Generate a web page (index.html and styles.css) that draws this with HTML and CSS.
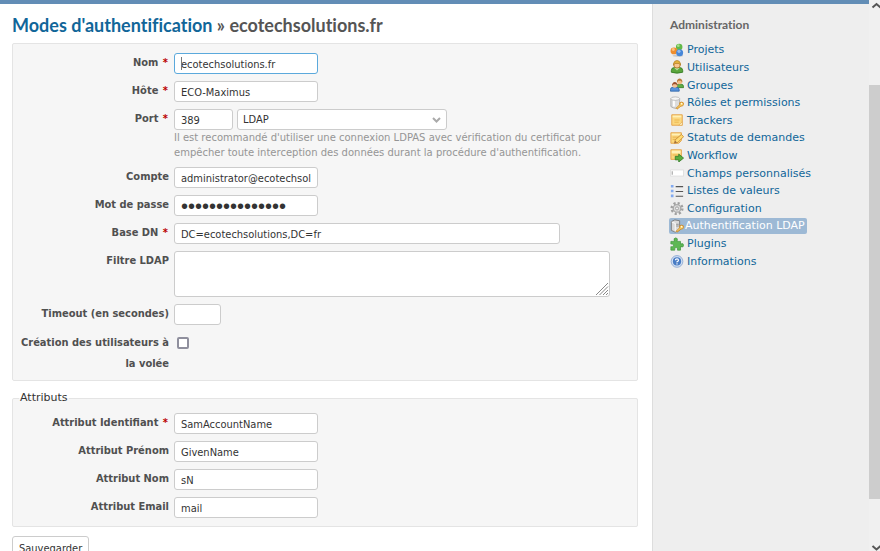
FILE: index.html
```html
<!DOCTYPE html>
<html lang="fr">
<head>
<meta charset="utf-8">
<title>Modes d'authentification</title>
<link rel="stylesheet" href="styles.css">
</head>
<body>
<div class="page">
  <div class="topbar"></div>
  <div class="main">
    <main class="content">
      <h2><a href="#">Modes d'authentification</a> » ecotechsolutions.fr</h2>
      <form>
        <div class="box">
          <div class="row"><label for="name">Nom <span class="required">*</span></label><div class="field caret"><input class="text focused" id="name" type="text" value="ecotechsolutions.fr"></div></div>
          <div class="row"><label for="host">Hôte <span class="required">*</span></label><div class="field"><input class="text" id="host" type="text" value="ECO-Maximus"></div></div>
          <div class="row"><label for="port">Port <span class="required">*</span></label>
            <div class="field">
              <input class="port" id="port" type="text" value="389">
              <span class="select-wrap"><select aria-label="Mode LDAP"><option>LDAP</option></select><svg viewBox="0 0 9 6"><path d="M1 1l3.500 3.500L8 1"/></svg></span>
              <em class="info">Il est recommandé d'utiliser une connexion LDPAS avec vérification du certificat pour empêcher toute interception des données durant la procédure d'authentification.</em>
            </div>
          </div>
          <div class="row"><label for="account">Compte</label><div class="field"><input class="text" id="account" type="text" value="administrator@ecotechsolutions.fr"></div></div>
          <div class="row"><label for="password">Mot de passe</label><div class="field"><input class="text password" id="password" type="password" value="xxxxxxxxxxxxxxx"></div></div>
          <div class="row"><label for="dn">Base DN <span class="required">*</span></label><div class="field"><input class="wide" id="dn" type="text" value="DC=ecotechsolutions,DC=fr"></div></div>
          <div class="row"><label for="filter">Filtre LDAP</label><div class="field"><span class="area-wrap"><textarea id="filter"></textarea><svg viewBox="0 0 14 14"><path d="M1 13L13 1M4.500 13L13 4.500M8 13l5-5M11 13l2-2"/></svg></span></div></div>
          <div class="row"><label for="timeout">Timeout (en secondes)</label><div class="field"><input class="short" id="timeout" type="text"></div></div>
          <div class="row"><label for="onthefly">Création des utilisateurs à la volée</label><div class="field"><input id="onthefly" type="checkbox"></div></div>
        </div>
        <fieldset class="box">
          <legend>Attributs</legend>
          <div class="row"><label for="alogin">Attribut Identifiant <span class="required">*</span></label><div class="field"><input class="text" id="alogin" type="text" value="SamAccountName"></div></div>
          <div class="row"><label for="afirst">Attribut Prénom</label><div class="field"><input class="text" id="afirst" type="text" value="GivenName"></div></div>
          <div class="row"><label for="alast">Attribut Nom</label><div class="field"><input class="text" id="alast" type="text" value="sN"></div></div>
          <div class="row"><label for="amail">Attribut Email</label><div class="field"><input class="text" id="amail" type="text" value="mail"></div></div>
        </fieldset>
        <button type="button">Sauvegarder</button>
      </form>
    </main>
    <aside class="sidebar">
      <h3>Administration</h3>
      <ul>
        <li><a href="#"><svg viewBox="0 0 16 16"><ellipse cx="9" cy="14.500" rx="6" ry="1.200" fill="#ccc"/><circle cx="10.500" cy="4.500" r="3.700" fill="#62b947"/><circle cx="9.500" cy="3" r="1.600" fill="#a6de8b"/><circle cx="4.500" cy="9" r="3.900" fill="#ee8d2e"/><circle cx="3.800" cy="7.500" r="1.700" fill="#fac37e"/><circle cx="11" cy="11" r="4" fill="#4787d8"/><circle cx="10.300" cy="9.500" r="1.800" fill="#91bcf0"/></svg>Projets</a></li>
        <li><a href="#"><svg viewBox="0 0 16 16"><path d="M1.500 14V12q0-3.500 4-3.500h5q4 0 4 3.500v2q-6.500 2-13 0z" fill="#5aa53c" stroke="#337c22"/><path d="M5 9l3 3 3-3z" fill="#b8df9e"/><circle cx="8" cy="5.500" r="3.700" fill="#f8c591" stroke="#b67927"/><path d="M4 6V4q1-3.500 4-3.500T12 4v2L10.500 4h-5z" fill="#e3b13d" stroke="#aa741d" stroke-width=".7"/></svg>Utilisateurs</a></li>
        <li><a href="#"><svg viewBox="0 0 16 16"><path d="M7 11V9.500Q7 7 10 7h2.500Q15.500 7 15.500 10v1z" fill="#60ac45" stroke="#3c832b"/><circle cx="11" cy="4" r="3" fill="#f4bc83"/><path d="M8 5V3q1-2.500 3-2.500T14 3v2l-1.500-2h-3z" fill="#b67a3a"/><path d="M.500 15v-2Q.500 10.500 4 10.500h3q3.500 0 3.500 3V15z" fill="#5792dc" stroke="#3468a9"/><circle cx="5.500" cy="8" r="3" fill="#f5c196"/><path d="M2.500 9V7q1-2.500 3-2.500t3 2.500v2L7 7H4z" fill="#994d2a"/></svg>Groupes</a></li>
        <li><a href="#"><svg viewBox="0 0 16 16"><path d="M1 3v9q5 4 10 0V3z" fill="#ddd" stroke="#999" stroke-width=".8"/><path d="M3.500 4v8h2V4z" fill="#fff"/><ellipse cx="6" cy="3" rx="5" ry="2" fill="#f6f6f6" stroke="#aaa" stroke-width=".8"/><path d="M8 15l-1-1 4-4q-1-3 2-3t2.500 2.500q-.5 2.500-3 2z" fill="#f9cf66" stroke="#d28b25"/><circle cx="13.300" cy="8.800" r=".8" fill="#fff"/></svg>Rôles et permissions</a></li>
        <li><a href="#"><svg viewBox="0 0 16 16"><path d="M2 2h12v12H2z" fill="#fbd77e" stroke="#e3a044"/><path d="M3 3h10v2H3z" fill="#fff0b8"/><path d="M5 8h6M5 10.500h5" stroke="#e9b44a"/><path d="M14 10l-4 4h4z" fill="#fff3c7" stroke="#dca046" stroke-width=".6"/></svg>Trackers</a></li>
        <li><a href="#"><svg viewBox="0 0 16 16"><path d="M1 2h12v9l-3 3H1z" fill="#fbd77e" stroke="#e3a044"/><path d="M2 3h10v2H2z" fill="#fff0b8"/><path d="M3 7h7M3 9.500h4" stroke="#e6ad46"/><path d="M5 14l1-4 7-6 2.500 2.500L9 13z" fill="#ffdb73" stroke="#c88931"/><path d="M5 14l1-3 2 2z" fill="#9b6c42"/></svg>Statuts de demandes</a></li>
        <li><a href="#"><svg viewBox="0 0 16 16"><path d="M1 2h12v11H1z" fill="#fbd77e" stroke="#e3a044"/><path d="M2 3h10v3H2z" fill="#fff0b8"/><path d="M3 8h7" stroke="#e6ad46"/><path d="M6 9.500h4V7l5.500 4.500L10 16v-2.500H6z" fill="#59ad3e" stroke="#377f29"/></svg>Workflow</a></li>
        <li><a href="#"><svg viewBox="0 0 16 16"><path d="M.500 4.500h15v7H.500z" fill="#fff" stroke="#ddd"/><path d="M2.500 6v4" stroke="#888"/></svg>Champs personnalisés</a></li>
        <li><a href="#"><svg viewBox="0 0 16 16"><path d="M1 1h3v3H1zM1 6.500h3v3H1zM1 12h3v3H1z" fill="#82aaf0"/><path d="M6.500 3H15M6.500 8.500H15M6.500 14H15" stroke="#555" stroke-width="1.200"/></svg>Listes de valeurs</a></li>
        <li><a href="#"><svg viewBox="0 0 16 16"><circle cx="8" cy="8.500" r="6" fill="none" stroke="#a0a0a0" stroke-width="3" stroke-dasharray="2.400 2.310"/><circle cx="8" cy="8.500" r="4.300" fill="#ddd" stroke="#aaa" stroke-width="1.500"/><circle cx="8" cy="8.500" r="1.800" fill="#eee" stroke="#999"/></svg>Configuration</a></li>
        <li><a class="selected" href="#"><svg viewBox="0 0 16 16"><path d="M1.500 3l4-2L11 2v11l-5 2-4.500-2z" fill="#d9d9d9" stroke="#777"/><path d="M2 3.500L6 5v9.500" fill="none" stroke="#fff"/><path d="M7 6h3M7 8h3" stroke="#888"/><path d="M8 15l-1-1 4-4q-1-3 2-3t2.500 2.500q-.5 2.500-3 2z" fill="#f9cf66" stroke="#c88931"/><circle cx="13.300" cy="8.800" r=".8" fill="#fff"/></svg>Authentification LDAP</a></li>
        <li><a href="#"><svg viewBox="0 0 16 16"><path d="M1 5h4Q3.500 1 6.500 1T8 5h4v3q3.500-1.500 3.500 1.500T12 11v4H8.500q1-3-1.500-3t-1.500 3H1v-4q3 1 3-1.500T1 8z" fill="#5eb854" stroke="#3d943b" stroke-width=".8"/></svg>Plugins</a></li>
        <li><a href="#"><svg viewBox="0 0 16 16"><circle cx="8" cy="8.500" r="6.700" fill="#d0dff2" stroke="#8aa7d1"/><circle cx="8" cy="8.500" r="4.700" fill="#477bc4"/><path d="M6.300 7q0-1.500 1.700-1.500T9.700 7Q9.700 8 8 8.800v.9M8 10.700V12" fill="none" stroke="#fff" stroke-width="1.300"/></svg>Informations</a></li>
      </ul>
    </aside>
  </div>
</div>
<div class="scrollbar">
  <svg viewBox="0 0 11 9"><path d="M3.500 7.500L7.500 4l4 3.500"/></svg>
  <div class="thumb"></div>
  <svg viewBox="0 0 11 9"><path d="M3.500 4l4 3.500 4-3.500"/></svg>
</div>
</body>
</html>
```
FILE: styles.css
```css
* { box-sizing: border-box; }
body {
  margin: 0;
  height: 100vh;
  overflow: hidden;
  display: flex;
  font: 11px/21px "DejaVu Sans", Verdana, sans-serif;
  color: #333;
  background: #fff;
}
a { color: #169; text-decoration: none; }
.page { flex: 1; min-width: 0; display: flex; flex-direction: column; }
.topbar { height: 4px; flex: none; background: #628db6; }
.main { flex: 1; min-height: 0; display: flex; }
.content { flex: 1; min-width: 0; padding: 8px 14px 0 12px; overflow: hidden; }
h2, h3 { font-family: Lato, "Trebuchet MS", sans-serif; font-weight: bold; font-variant-ligatures: none; }
h2 { margin: 0 0 5px; font-size: 18px; line-height: 26px; color: #555; }
.box {
  margin: 0 0 10px;
  padding: 9px 6px 6px;
  border: 1px solid #e4e4e4;
  border-radius: 2px;
  background: #f6f6f6;
}
.row { display: flex; gap: 5px; margin-bottom: 7px; }
.row:last-child { margin-bottom: 0; }
.row label {
  width: 150px;
  flex: none;
  font-family: "DejaVu Sans Condensed", Verdana, sans-serif;
  font-weight: bold;
  text-align: right;
  color: #505050;
  line-height: 20px;
}
.required { color: #b00; margin: 0 1px; }
.field { flex: 1; min-width: 0; display: flex; flex-wrap: wrap; gap: 0 4px; position: relative; }
input, select, textarea, button {
  margin: 0;
  border: 1px solid #ccc;
  border-radius: 3px;
  background: #fff;
  color: #333;
  font: 11px/15px "DejaVu Sans Condensed", Tahoma, sans-serif;
}
input { height: 21px; padding: 1px 6px 0; }
.text { width: 144px; }
input.focused { border-color: #5ba9dc; outline: 0; }
.caret::before { content: ""; position: absolute; left: 7px; top: 4px; width: 1px; height: 13px; background: #777; }
.password { font-family: "Liberation Sans", sans-serif; font-size: 20px; }
.port { width: 59px; }
.wide { width: 386px; }
.short { width: 47px; }
.select-wrap { position: relative; width: 210px; height: 21px; }
.select-wrap svg { position: absolute; right: 6px; top: 8px; width: 9px; height: 6px; fill: none; stroke: #aaa; stroke-width: 2; }
select { display: block; width: 100%; height: 21px; padding: 0 5px; appearance: none; }
.info { max-width: 440px; font-style: normal; font-size: 10px; line-height: 15px; color: #959595; }
.area-wrap { position: relative; width: 436px; height: 46px; }
textarea { display: block; width: 100%; height: 46px; resize: none; }
.area-wrap svg { position: absolute; right: 1px; bottom: 1px; width: 14px; height: 14px; fill: none; stroke: #888; }
input[type="checkbox"] { appearance: none; width: 12px; height: 12px; margin: 5px 0 0 3px; padding: 0; border: 2px solid #8f8f9d; border-radius: 2px; }
.row label[for="onthefly"] { line-height: 21px; }
fieldset.box { padding-top: 8px; padding-bottom: 8px; margin-bottom: 9px; }
legend { height: 14px; line-height: 14px; padding: 0 1px; color: #333; }
button { height: 25px; padding: 0 6px; }
.sidebar { width: 217px; flex: none; padding: 11px 16px 0; background: #eee; border-left: 1px solid #ddd; }
h3 { margin: 0 0 6px 1px; font-size: 12px; line-height: 20px; color: #666; }
ul { display: grid; height: 229px; margin: 0; padding: 0; list-style: none; }
li { display: flex; align-items: center; }
li a { display: flex; align-items: center; height: 16px; padding: 0 2px 0 1px; gap: 3px; white-space: nowrap; }
li svg { width: 14px; height: 14px; flex: none; }
a.selected { gap: 1px; color: #fff; background: #9db9d5; border-radius: 2px; }
.scrollbar { width: 11px; flex: none; display: flex; flex-direction: column; justify-content: space-between; background: #f0f0f0; }
.scrollbar svg { height: 9px; width: 11px; fill: none; stroke: #555; stroke-width: 2; }
.thumb { flex: 0 0 75%; margin-bottom: -33px; background: #cdcdcd; }
```
